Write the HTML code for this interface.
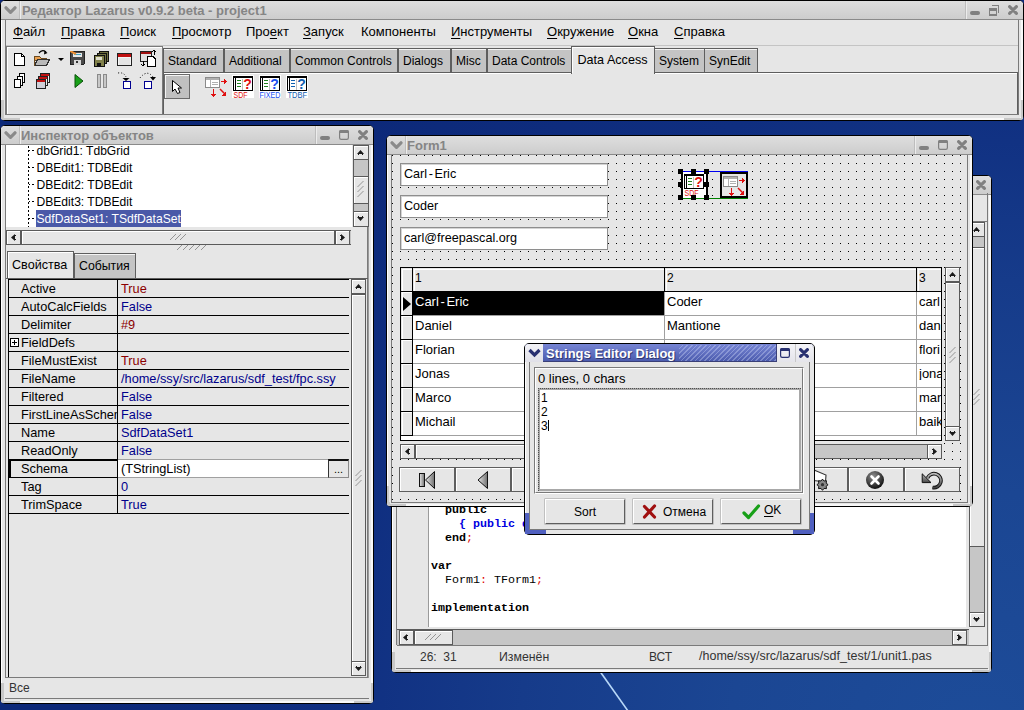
<!DOCTYPE html>
<html><head><meta charset="utf-8">
<style>
*{margin:0;padding:0;box-sizing:border-box}
html,body{width:1024px;height:710px;overflow:hidden}
body{position:relative;font-family:"Liberation Sans",sans-serif;font-size:12px;color:#000;
background:radial-gradient(circle 700px at 980px 740px,#1d4c99 0px,#1b4693 250px,#163b8a 460px,#0f2e80 660px,#0c2878 900px)}
.a{position:absolute}
.t{position:absolute;white-space:nowrap;line-height:1}
u{text-decoration:underline;text-underline-offset:2px}
</style></head><body>

<svg class="a" style="left:590px;top:660px" width="50" height="50"><line x1="9" y1="10" x2="38" y2="51" stroke="#b8d8f8" stroke-width="1.6"/></svg>
<div class="a" style="left:0px;top:0px;width:1024px;height:121px;background:#e6e6e6;border:1px solid #000;border-radius:5px"></div>
<div class="a" style="left:1px;top:1px;width:1022px;height:119px;border-top:1px solid #fff;border-left:1px solid #fff;border-right:2px solid #f8f8f8;border-bottom:2px solid #f8f8f8;border-radius:4px"></div>
<div class="a" style="left:1px;top:100px;width:3px;height:19px;background:#c8c8c8"></div>
<div class="a" style="left:1px;top:118px;width:19px;height:2px;background:#c8c8c8;border-bottom-left-radius:4px"></div>
<div class="a" style="left:1021px;top:100px;width:2px;height:19px;background:#c8c8c8"></div>
<div class="a" style="left:1004px;top:118px;width:19px;height:2px;background:#c8c8c8;border-bottom-right-radius:4px"></div>
<div class="a" style="left:1px;top:1px;width:1022px;height:19px;background:linear-gradient(#dedede,#cdcdcd);border-radius:4px 4px 0 0;border-bottom:1px solid #8a8a8a"></div>
<div class="t" style="left:22px;top:4.00px;font-size:13px;font-weight:bold;font-family:'Liberation Sans';color:#858585">Редактор Lazarus v0.9.2 beta - project1</div>
<div class="a" style="left:19px;top:1px;width:1px;height:18px;background:#bdbdbd"></div>
<div class="a" style="left:20px;top:1px;width:1px;height:18px;background:#ececec"></div>
<div class="a" style="left:965px;top:1px;width:1px;height:18px;background:#bdbdbd"></div>
<div class="a" style="left:966px;top:1px;width:1px;height:18px;background:#ececec"></div>
<svg class="a" style="left:3.5px;top:6px" width="14" height="10"><polyline points="2,1.8 6.5,6.3 11,1.8" fill="none" stroke="#8a8a8a" stroke-width="3.2" stroke-linecap="round" stroke-linejoin="round"/></svg>
<svg class="a" style="left:970px;top:11px" width="10" height="4"><rect x="0" y="0" width="10" height="4" rx="2" fill="#808080"/></svg>
<svg class="a" style="left:989px;top:5px" width="11" height="11" shape-rendering="crispEdges"><path d="M2.5,0.5 H9.5 V7.5" fill="none" stroke="#808080" stroke-width="1.2"/><rect x="0.5" y="3.5" width="7" height="6.5" fill="none" stroke="#808080" stroke-width="1.2"/><rect x="0" y="3" width="8" height="2.5" fill="#808080"/></svg>
<svg class="a" style="left:1008px;top:5px" width="10" height="10"><path d="M1.6,1.6 L8.4,8.4 M8.4,1.6 L1.6,8.4" stroke="#808080" stroke-width="3.1" stroke-linecap="round"/></svg>
<div class="a" style="left:5px;top:20px;width:1px;height:95px;background:#7a7a7a"></div>
<div class="t" style="left:13px;top:25.00px;font-size:13px;font-family:'Liberation Sans';"><u>Ф</u>айл</div>
<div class="t" style="left:61px;top:25.00px;font-size:13px;font-family:'Liberation Sans';"><u>П</u>равка</div>
<div class="t" style="left:120px;top:25.00px;font-size:13px;font-family:'Liberation Sans';"><u>П</u>оиск</div>
<div class="t" style="left:172px;top:25.00px;font-size:13px;font-family:'Liberation Sans';"><u>П</u>росмотр</div>
<div class="t" style="left:246px;top:25.00px;font-size:13px;font-family:'Liberation Sans';">Про<u>е</u>кт</div>
<div class="t" style="left:303px;top:25.00px;font-size:13px;font-family:'Liberation Sans';"><u>З</u>апуск</div>
<div class="t" style="left:361px;top:25.00px;font-size:13px;font-family:'Liberation Sans';">Компоненты</div>
<div class="t" style="left:451px;top:25.00px;font-size:13px;font-family:'Liberation Sans';"><u>И</u>нструменты</div>
<div class="t" style="left:547px;top:25.00px;font-size:13px;font-family:'Liberation Sans';"><u>О</u>кружение</div>
<div class="t" style="left:628px;top:25.00px;font-size:13px;font-family:'Liberation Sans';"><u>О</u>кна</div>
<div class="t" style="left:674px;top:25.00px;font-size:13px;font-family:'Liberation Sans';"><u>С</u>правка</div>
<div class="a" style="left:6px;top:45px;width:1012px;height:1px;background:#c4c4c4"></div>
<div class="a" style="left:6px;top:46px;width:157px;height:69px;border:1px solid #7a7a7a;border-top-color:#7a7a7a"></div>
<div class="a" style="left:7px;top:47px;width:155px;height:1px;background:#fff"></div>
<div class="a" style="left:7px;top:47px;width:1px;height:67px;background:#fff"></div>
<div class="a" style="left:163px;top:48px;width:61px;height:25px;background:#c4c4c4;border:1px solid #5e5e5e;border-bottom:none"></div>
<div class="a" style="left:164px;top:49px;width:59px;height:1px;background:#f4f4f4"></div>
<div class="t" style="left:168px;top:54.5px;font-size:12px">Standard</div>
<div class="a" style="left:224px;top:48px;width:66px;height:25px;background:#c4c4c4;border:1px solid #5e5e5e;border-bottom:none"></div>
<div class="a" style="left:225px;top:49px;width:64px;height:1px;background:#f4f4f4"></div>
<div class="t" style="left:229px;top:54.5px;font-size:12px">Additional</div>
<div class="a" style="left:290px;top:48px;width:108px;height:25px;background:#c4c4c4;border:1px solid #5e5e5e;border-bottom:none"></div>
<div class="a" style="left:291px;top:49px;width:106px;height:1px;background:#f4f4f4"></div>
<div class="t" style="left:295px;top:54.5px;font-size:12px">Common Controls</div>
<div class="a" style="left:398px;top:48px;width:53px;height:25px;background:#c4c4c4;border:1px solid #5e5e5e;border-bottom:none"></div>
<div class="a" style="left:399px;top:49px;width:51px;height:1px;background:#f4f4f4"></div>
<div class="t" style="left:403px;top:54.5px;font-size:12px">Dialogs</div>
<div class="a" style="left:451px;top:48px;width:36px;height:25px;background:#c4c4c4;border:1px solid #5e5e5e;border-bottom:none"></div>
<div class="a" style="left:452px;top:49px;width:34px;height:1px;background:#f4f4f4"></div>
<div class="t" style="left:456px;top:54.5px;font-size:12px">Misc</div>
<div class="a" style="left:487px;top:48px;width:85px;height:25px;background:#c4c4c4;border:1px solid #5e5e5e;border-bottom:none"></div>
<div class="a" style="left:488px;top:49px;width:83px;height:1px;background:#f4f4f4"></div>
<div class="t" style="left:492px;top:54.5px;font-size:12px">Data Controls</div>
<div class="a" style="left:654px;top:48px;width:51px;height:25px;background:#c4c4c4;border:1px solid #5e5e5e;border-bottom:none"></div>
<div class="a" style="left:655px;top:49px;width:49px;height:1px;background:#f4f4f4"></div>
<div class="t" style="left:659px;top:54.5px;font-size:12px">System</div>
<div class="a" style="left:704px;top:48px;width:54px;height:25px;background:#c4c4c4;border:1px solid #5e5e5e;border-bottom:none"></div>
<div class="a" style="left:705px;top:49px;width:52px;height:1px;background:#f4f4f4"></div>
<div class="t" style="left:709px;top:54.5px;font-size:12px">SynEdit</div>
<div class="a" style="left:163px;top:72px;width:855px;height:43px;border:1px solid #5e5e5e;border-top:1px solid #5e5e5e"></div>
<div class="a" style="left:164px;top:73px;width:853px;height:1px;background:#fff"></div>
<div class="a" style="left:571px;top:46px;width:84px;height:28px;background:#e6e6e6;border:1px solid #5e5e5e;border-bottom:none"></div>
<div class="a" style="left:572px;top:47px;width:82px;height:1px;background:#fff"></div>
<div class="a" style="left:572px;top:47px;width:1px;height:26px;background:#fff"></div>
<div class="t" style="left:577.5px;top:54px;font-size:12.6px">Data Access</div>
<div class="a" style="left:5px;top:114px;width:1014px;height:1px;background:#7a7a7a"></div>
<div class="a" style="left:1018px;top:20px;width:1px;height:95px;background:#7a7a7a"></div>
<div class="a" style="left:0px;top:125px;width:374px;height:579px;background:#e6e6e6;border:1px solid #000;border-radius:5px"></div>
<div class="a" style="left:1px;top:126px;width:372px;height:577px;border-top:1px solid #fff;border-left:1px solid #fff;border-right:2px solid #f8f8f8;border-bottom:2px solid #f8f8f8;border-radius:4px"></div>
<div class="a" style="left:1px;top:683px;width:3px;height:19px;background:#c8c8c8"></div>
<div class="a" style="left:1px;top:701px;width:19px;height:2px;background:#c8c8c8;border-bottom-left-radius:4px"></div>
<div class="a" style="left:371px;top:683px;width:2px;height:19px;background:#c8c8c8"></div>
<div class="a" style="left:354px;top:701px;width:19px;height:2px;background:#c8c8c8;border-bottom-right-radius:4px"></div>
<div class="a" style="left:1px;top:126px;width:372px;height:19px;background:linear-gradient(#dedede,#cdcdcd);border-radius:4px 4px 0 0;border-bottom:1px solid #8a8a8a"></div>
<div class="t" style="left:21px;top:129.00px;font-size:13px;font-weight:bold;font-family:'Liberation Sans';color:#858585">Инспектор объектов</div>
<div class="a" style="left:19px;top:126px;width:1px;height:18px;background:#bdbdbd"></div>
<div class="a" style="left:20px;top:126px;width:1px;height:18px;background:#ececec"></div>
<div class="a" style="left:315px;top:126px;width:1px;height:18px;background:#bdbdbd"></div>
<div class="a" style="left:316px;top:126px;width:1px;height:18px;background:#ececec"></div>
<svg class="a" style="left:3.5px;top:131px" width="14" height="10"><polyline points="2,1.8 6.5,6.3 11,1.8" fill="none" stroke="#8a8a8a" stroke-width="3.2" stroke-linecap="round" stroke-linejoin="round"/></svg>
<svg class="a" style="left:320px;top:136px" width="10" height="4"><rect x="0" y="0" width="10" height="4" rx="2" fill="#808080"/></svg>
<svg class="a" style="left:339px;top:130px" width="10" height="10"><rect x="0.6" y="0.6" width="8.8" height="8.8" rx="1.6" fill="none" stroke="#808080" stroke-width="1.2"/><path d="M0,3 V2 Q0,0 2,0 H8 Q10,0 10,2 V3 Z" fill="#808080"/></svg>
<svg class="a" style="left:358px;top:130px" width="10" height="10"><path d="M1.6,1.6 L8.4,8.4 M8.4,1.6 L1.6,8.4" stroke="#808080" stroke-width="3.1" stroke-linecap="round"/></svg>
<div class="a" style="left:5px;top:145px;width:1px;height:533px;background:#7a7a7a"></div>
<div class="a" style="left:367px;top:145px;width:1px;height:533px;background:#7a7a7a"></div>
<div class="a" style="left:368px;top:145px;width:1px;height:533px;background:#9a9a9a"></div>
<div class="a" style="left:6px;top:145px;width:347px;height:82px;background:#fff"></div>
<svg class="a" style="left:20px;top:145px" width="20" height="82"><line x1="8.5" y1="1" x2="8.5" y2="82" stroke="#000" stroke-dasharray="2,2"/><rect x="9" y="5" width="1" height="1" fill="#000"/><rect x="12" y="5" width="2" height="1" fill="#000"/><rect x="9" y="22" width="1" height="1" fill="#000"/><rect x="12" y="22" width="2" height="1" fill="#000"/><rect x="9" y="39" width="1" height="1" fill="#000"/><rect x="12" y="39" width="2" height="1" fill="#000"/><rect x="9" y="56" width="1" height="1" fill="#000"/><rect x="12" y="56" width="2" height="1" fill="#000"/><rect x="9" y="73" width="1" height="1" fill="#000"/><rect x="12" y="73" width="2" height="1" fill="#000"/></svg>
<div class="t" style="left:36.5px;top:144.76px;font-size:12.1px;font-family:'Liberation Sans';">dbGrid1: TdbGrid</div>
<div class="t" style="left:36.5px;top:161.76px;font-size:12.1px;font-family:'Liberation Sans';">DBEdit1: TDBEdit</div>
<div class="t" style="left:36.5px;top:178.76px;font-size:12.1px;font-family:'Liberation Sans';">DBEdit2: TDBEdit</div>
<div class="t" style="left:36.5px;top:195.76px;font-size:12.1px;font-family:'Liberation Sans';">DBEdit3: TDBEdit</div>
<div class="a" style="left:36px;top:210px;width:145px;height:17px;background:#4a59a8"></div>
<div class="t" style="left:36.5px;top:212.76px;font-size:12.1px;font-family:'Liberation Sans';color:#fff">SdfDataSet1: TSdfDataSet</div>
<div class="a" style="left:352px;top:145px;width:1px;height:82px;background:#e6e6e6"></div>
<div class="a" style="left:353px;top:145px;width:16px;height:82px;background:#c6c6c6;border-left:1px solid #5a5a5a;border-right:1px solid #5a5a5a"></div>
<div class="a" style="left:353px;top:145px;width:16px;height:15px;background:#e6e6e6;border:1px solid #5a5a5a"></div>
<div class="a" style="left:354px;top:146px;width:14px;height:13px;border-top:1px solid #fff;border-left:1px solid #fff"></div>
<div class="a" style="left:353px;top:176px;width:16px;height:28px;background:#e6e6e6;border:1px solid #5a5a5a"></div>
<div class="a" style="left:354px;top:177px;width:14px;height:26px;border-top:1px solid #fff;border-left:1px solid #fff"></div>
<div class="a" style="left:353px;top:211px;width:16px;height:16px;background:#e6e6e6;border:1px solid #5a5a5a"></div>
<div class="a" style="left:354px;top:212px;width:14px;height:14px;border-top:1px solid #fff;border-left:1px solid #fff"></div>
<div class="a" style="left:6px;top:227px;width:347px;height:3px;background:#e6e6e6"></div>
<div class="a" style="left:6px;top:230px;width:345px;height:15px;border-top:1px solid #5a5a5a;border-bottom:1px solid #5a5a5a;background:#c6c6c6"></div>
<div class="a" style="left:6px;top:230px;width:15px;height:15px;background:#e6e6e6;border:1px solid #5a5a5a"></div>
<div class="a" style="left:7px;top:231px;width:13px;height:13px;border-top:1px solid #fff;border-left:1px solid #fff"></div>
<div class="a" style="left:21px;top:230px;width:314px;height:15px;background:#e6e6e6;border:1px solid #5a5a5a"></div>
<div class="a" style="left:22px;top:231px;width:312px;height:13px;border-top:1px solid #fff;border-left:1px solid #fff"></div>
<div class="a" style="left:335px;top:230px;width:15px;height:15px;background:#e6e6e6;border:1px solid #5a5a5a"></div>
<div class="a" style="left:336px;top:231px;width:13px;height:13px;border-top:1px solid #fff;border-left:1px solid #fff"></div>
<div class="a" style="left:74px;top:253px;width:62px;height:25px;background:#c4c4c4;border:1px solid #5e5e5e;border-bottom:none"></div>
<div class="a" style="left:75px;top:254px;width:60px;height:1px;background:#f4f4f4"></div>
<div class="t" style="left:79px;top:259.59px;font-size:12.3px;font-family:'Liberation Sans';">События</div>
<div class="a" style="left:7px;top:251px;width:67px;height:28px;background:#e6e6e6;border:1px solid #5e5e5e;border-bottom:none"></div>
<div class="a" style="left:8px;top:252px;width:65px;height:1px;background:#fff"></div>
<div class="a" style="left:8px;top:252px;width:1px;height:26px;background:#fff"></div>
<div class="t" style="left:12px;top:259.33px;font-size:12.6px;font-family:'Liberation Sans';">Свойства</div>
<div class="a" style="left:6px;top:278px;width:362px;height:1px;background:#5e5e5e"></div>
<div class="a" style="left:8px;top:279px;width:341px;height:398px;border-left:1px solid #000;border-top:1px solid #000;background:#e6e6e6"></div>
<div class="a" style="left:9px;top:297px;width:340px;height:1px;background:#000"></div>
<div class="a" style="left:117px;top:280px;width:1px;height:17px;background:#000"></div>
<div class="t" style="left:21px;top:282.90px;width:96px;overflow:hidden;font-size:12.75px">Active</div>
<div class="t" style="left:121px;top:282.90px;font-size:12.75px;color:#8b0000">True</div>
<div class="a" style="left:9px;top:315px;width:340px;height:1px;background:#000"></div>
<div class="a" style="left:117px;top:298px;width:1px;height:17px;background:#000"></div>
<div class="t" style="left:21px;top:300.90px;width:96px;overflow:hidden;font-size:12.75px">AutoCalcFields</div>
<div class="t" style="left:121px;top:300.90px;font-size:12.75px;color:#00008b">False</div>
<div class="a" style="left:9px;top:333px;width:340px;height:1px;background:#000"></div>
<div class="a" style="left:117px;top:316px;width:1px;height:17px;background:#000"></div>
<div class="t" style="left:21px;top:318.90px;width:96px;overflow:hidden;font-size:12.75px">Delimiter</div>
<div class="t" style="left:121px;top:318.90px;font-size:12.75px;color:#8b0000">#9</div>
<div class="a" style="left:9px;top:351px;width:340px;height:1px;background:#000"></div>
<div class="a" style="left:117px;top:334px;width:1px;height:17px;background:#000"></div>
<div class="t" style="left:21px;top:336.90px;width:96px;overflow:hidden;font-size:12.75px">FieldDefs</div>
<div class="a" style="left:9px;top:369px;width:340px;height:1px;background:#000"></div>
<div class="a" style="left:117px;top:352px;width:1px;height:17px;background:#000"></div>
<div class="t" style="left:21px;top:354.90px;width:96px;overflow:hidden;font-size:12.75px">FileMustExist</div>
<div class="t" style="left:121px;top:354.90px;font-size:12.75px;color:#8b0000">True</div>
<div class="a" style="left:9px;top:387px;width:340px;height:1px;background:#000"></div>
<div class="a" style="left:117px;top:370px;width:1px;height:17px;background:#000"></div>
<div class="t" style="left:21px;top:372.90px;width:96px;overflow:hidden;font-size:12.75px">FileName</div>
<div class="t" style="left:121px;top:372.90px;font-size:12.75px;color:#00008b">/home/ssy/src/lazarus/sdf_test/fpc.ssy</div>
<div class="a" style="left:9px;top:405px;width:340px;height:1px;background:#000"></div>
<div class="a" style="left:117px;top:388px;width:1px;height:17px;background:#000"></div>
<div class="t" style="left:21px;top:390.90px;width:96px;overflow:hidden;font-size:12.75px">Filtered</div>
<div class="t" style="left:121px;top:390.90px;font-size:12.75px;color:#00008b">False</div>
<div class="a" style="left:9px;top:423px;width:340px;height:1px;background:#000"></div>
<div class="a" style="left:117px;top:406px;width:1px;height:17px;background:#000"></div>
<div class="t" style="left:21px;top:408.90px;width:96px;overflow:hidden;font-size:12.75px">FirstLineAsSchema</div>
<div class="t" style="left:121px;top:408.90px;font-size:12.75px;color:#00008b">False</div>
<div class="a" style="left:9px;top:441px;width:340px;height:1px;background:#000"></div>
<div class="a" style="left:117px;top:424px;width:1px;height:17px;background:#000"></div>
<div class="t" style="left:21px;top:426.90px;width:96px;overflow:hidden;font-size:12.75px">Name</div>
<div class="t" style="left:121px;top:426.90px;font-size:12.75px;color:#00008b">SdfDataSet1</div>
<div class="a" style="left:9px;top:459px;width:340px;height:1px;background:#000"></div>
<div class="a" style="left:117px;top:442px;width:1px;height:17px;background:#000"></div>
<div class="t" style="left:21px;top:444.90px;width:96px;overflow:hidden;font-size:12.75px">ReadOnly</div>
<div class="t" style="left:121px;top:444.90px;font-size:12.75px;color:#00008b">False</div>
<div class="a" style="left:9px;top:477px;width:340px;height:1px;background:#000"></div>
<div class="a" style="left:117px;top:460px;width:1px;height:17px;background:#000"></div>
<div class="t" style="left:21px;top:462.90px;width:96px;overflow:hidden;font-size:12.75px">Schema</div>
<div class="a" style="left:118px;top:459px;width:210px;height:19px;background:#fff;border-top:1px solid #a0a0a0;border-bottom:1px solid #a0a0a0"></div>
<div class="a" style="left:328px;top:459px;width:21px;height:19px;background:#e6e6e6;border-top:2px solid #111;border-left:1px solid #333;border-bottom:1px solid #8a8a8a;border-right:1px solid #8a8a8a"></div>
<div class="t" style="left:334px;top:463.69px;font-size:11px;font-family:'Liberation Sans';">...</div>
<div class="t" style="left:121px;top:462.90px;font-size:12.75px;color:#000">(TStringList)</div>
<div class="a" style="left:9px;top:495px;width:340px;height:1px;background:#000"></div>
<div class="a" style="left:117px;top:478px;width:1px;height:17px;background:#000"></div>
<div class="t" style="left:21px;top:480.90px;width:96px;overflow:hidden;font-size:12.75px">Tag</div>
<div class="t" style="left:121px;top:480.90px;font-size:12.75px;color:#00008b">0</div>
<div class="a" style="left:9px;top:513px;width:340px;height:1px;background:#000"></div>
<div class="a" style="left:117px;top:496px;width:1px;height:17px;background:#000"></div>
<div class="t" style="left:21px;top:498.90px;width:96px;overflow:hidden;font-size:12.75px">TrimSpace</div>
<div class="t" style="left:121px;top:498.90px;font-size:12.75px;color:#00008b">True</div>
<div class="a" style="left:10px;top:338px;width:9px;height:9px;border:1px solid #000;background:#fff"></div>
<div class="a" style="left:12px;top:342px;width:5px;height:1px;background:#000"></div>
<div class="a" style="left:14px;top:340px;width:1px;height:5px;background:#000"></div>
<div class="a" style="left:9px;top:459px;width:108px;height:19px;border:2px solid #000;border-right:none;border-bottom:none"></div>
<div class="a" style="left:351px;top:279px;width:15px;height:15px;background:#e6e6e6;border:1px solid #5a5a5a"></div>
<div class="a" style="left:352px;top:280px;width:13px;height:13px;border-top:1px solid #fff;border-left:1px solid #fff"></div>
<div class="a" style="left:351px;top:294px;width:15px;height:368px;background:#e6e6e6;border:1px solid #5a5a5a"></div>
<div class="a" style="left:352px;top:295px;width:13px;height:366px;border-top:1px solid #fff;border-left:1px solid #fff"></div>
<div class="a" style="left:351px;top:661px;width:15px;height:15px;background:#e6e6e6;border:1px solid #5a5a5a"></div>
<div class="a" style="left:352px;top:662px;width:13px;height:13px;border-top:1px solid #fff;border-left:1px solid #fff"></div>
<div class="a" style="left:6px;top:677px;width:362px;height:1px;background:#7a7a7a"></div>
<div class="t" style="left:9px;top:681.84px;font-size:12px;font-family:'Liberation Sans';color:#333">Все</div>
<div class="a" style="left:5px;top:698px;width:364px;height:1px;background:#7a7a7a"></div>
<div class="a" style="left:391px;top:175px;width:601px;height:498px;background:#e6e6e6;border:1px solid #000;border-radius:5px"></div>
<div class="a" style="left:392px;top:176px;width:599px;height:496px;border-top:1px solid #fff;border-left:1px solid #fff;border-right:2px solid #f8f8f8;border-bottom:2px solid #f8f8f8;border-radius:4px"></div>
<div class="a" style="left:392px;top:652px;width:3px;height:19px;background:#c8c8c8"></div>
<div class="a" style="left:392px;top:670px;width:19px;height:2px;background:#c8c8c8;border-bottom-left-radius:4px"></div>
<div class="a" style="left:989px;top:652px;width:2px;height:19px;background:#c8c8c8"></div>
<div class="a" style="left:972px;top:670px;width:19px;height:2px;background:#c8c8c8;border-bottom-right-radius:4px"></div>
<div class="a" style="left:392px;top:176px;width:599px;height:19px;background:linear-gradient(#dedede,#cdcdcd);border-radius:4px 4px 0 0;border-bottom:1px solid #8a8a8a"></div>
<svg class="a" style="left:976px;top:180px" width="10" height="10"><path d="M1.6,1.6 L8.4,8.4 M8.4,1.6 L1.6,8.4" stroke="#808080" stroke-width="3.1" stroke-linecap="round"/></svg>
<div class="a" style="left:396px;top:193px;width:1px;height:452px;background:#7a7a7a"></div>
<div class="a" style="left:987px;top:193px;width:1px;height:452px;background:#7a7a7a"></div>
<div class="a" style="left:397px;top:221px;width:590px;height:1px;background:#7a7a7a"></div>
<div class="a" style="left:397px;top:222px;width:32px;height:405px;background:#e6e6e6"></div>
<div class="a" style="left:428px;top:222px;width:1px;height:405px;background:#9a9a9a"></div>
<div class="a" style="left:429px;top:222px;width:537px;height:405px;background:#fff"></div>
<div class="a" style="left:969px;top:222px;width:16px;height:405px;background:#c6c6c6;border-left:1px solid #5a5a5a;border-right:1px solid #5a5a5a"></div>
<div class="a" style="left:969px;top:222px;width:16px;height:15px;background:#e6e6e6;border:1px solid #5a5a5a"></div>
<div class="a" style="left:970px;top:223px;width:14px;height:13px;border-top:1px solid #fff;border-left:1px solid #fff"></div>
<div class="a" style="left:969px;top:247px;width:16px;height:300px;background:#e6e6e6;border:1px solid #5a5a5a"></div>
<div class="a" style="left:970px;top:248px;width:14px;height:298px;border-top:1px solid #fff;border-left:1px solid #fff"></div>
<div class="a" style="left:969px;top:612px;width:16px;height:15px;background:#e6e6e6;border:1px solid #5a5a5a"></div>
<div class="a" style="left:970px;top:613px;width:14px;height:13px;border-top:1px solid #fff;border-left:1px solid #fff"></div>
<div class="a" style="left:397px;top:627px;width:572px;height:2px;background:#e6e6e6"></div>
<div class="a" style="left:397px;top:629px;width:572px;height:17px;background:#c6c6c6;border-top:1px solid #5a5a5a;border-bottom:1px solid #5a5a5a"></div>
<div class="a" style="left:399px;top:630px;width:15px;height:15px;background:#e6e6e6;border:1px solid #5a5a5a"></div>
<div class="a" style="left:400px;top:631px;width:13px;height:13px;border-top:1px solid #fff;border-left:1px solid #fff"></div>
<div class="a" style="left:414px;top:630px;width:39px;height:15px;background:#e6e6e6;border:1px solid #5a5a5a"></div>
<div class="a" style="left:415px;top:631px;width:37px;height:13px;border-top:1px solid #fff;border-left:1px solid #fff"></div>
<div class="a" style="left:952px;top:630px;width:15px;height:15px;background:#e6e6e6;border:1px solid #5a5a5a"></div>
<div class="a" style="left:953px;top:631px;width:13px;height:13px;border-top:1px solid #fff;border-left:1px solid #fff"></div>
<div class="a" style="left:397px;top:645px;width:591px;height:1px;background:#7a7a7a"></div>
<div class="t" style="left:420px;top:650.84px;font-size:12px;font-family:'Liberation Sans';color:#333">26:&nbsp;&nbsp;31</div>
<div class="t" style="left:499px;top:650.59px;font-size:12.3px;font-family:'Liberation Sans';color:#333">Изменён</div>
<div class="t" style="left:649px;top:650.84px;font-size:12px;font-family:'Liberation Sans';color:#333">ВСТ</div>
<div class="t" style="left:699px;top:650.42px;font-size:12.5px;font-family:'Liberation Sans';color:#333">/home/ssy/src/lazarus/sdf_test/1/unit1.pas</div>
<div class="a" style="left:396px;top:668px;width:592px;height:1px;background:#7a7a7a"></div>
<div class="t" style="left:445px;top:504.55px;font-size:11.67px;font-family:'Liberation Mono';"><b>public</b></div>
<div class="t" style="left:459px;top:518.55px;font-size:11.67px;font-family:'Liberation Mono';"><b style="color:#0000e0">{ public declarations }</b></div>
<div class="t" style="left:445px;top:532.55px;font-size:11.67px;font-family:'Liberation Mono';"><b>end</b><span style="color:#e00000">;</span></div>
<div class="t" style="left:431px;top:560.55px;font-size:11.67px;font-family:'Liberation Mono';"><b>var</b></div>
<div class="t" style="left:445px;top:574.55px;font-size:11.67px;font-family:'Liberation Mono';">Form1<span style="color:#e00000">:</span> TForm1<span style="color:#e00000">;</span></div>
<div class="t" style="left:431px;top:602.55px;font-size:11.67px;font-family:'Liberation Mono';"><b>implementation</b></div>
<div class="a" style="left:386px;top:135px;width:587px;height:372px;background:#e6e6e6;border:1px solid #000;border-radius:5px"></div>
<div class="a" style="left:387px;top:136px;width:585px;height:370px;border-top:1px solid #fff;border-left:1px solid #fff;border-right:2px solid #f8f8f8;border-bottom:2px solid #f8f8f8;border-radius:4px"></div>
<div class="a" style="left:387px;top:486px;width:3px;height:19px;background:#c8c8c8"></div>
<div class="a" style="left:387px;top:504px;width:19px;height:2px;background:#c8c8c8;border-bottom-left-radius:4px"></div>
<div class="a" style="left:970px;top:486px;width:2px;height:19px;background:#c8c8c8"></div>
<div class="a" style="left:953px;top:504px;width:19px;height:2px;background:#c8c8c8;border-bottom-right-radius:4px"></div>
<div class="a" style="left:387px;top:136px;width:585px;height:19px;background:linear-gradient(#dedede,#cdcdcd);border-radius:4px 4px 0 0;border-bottom:1px solid #8a8a8a"></div>
<div class="t" style="left:407px;top:139.00px;font-size:13px;font-weight:bold;font-family:'Liberation Sans';color:#858585">Form1</div>
<div class="a" style="left:405px;top:136px;width:1px;height:18px;background:#bdbdbd"></div>
<div class="a" style="left:406px;top:136px;width:1px;height:18px;background:#ececec"></div>
<div class="a" style="left:914px;top:136px;width:1px;height:18px;background:#bdbdbd"></div>
<div class="a" style="left:915px;top:136px;width:1px;height:18px;background:#ececec"></div>
<svg class="a" style="left:389.5px;top:141px" width="14" height="10"><polyline points="2,1.8 6.5,6.3 11,1.8" fill="none" stroke="#8a8a8a" stroke-width="3.2" stroke-linecap="round" stroke-linejoin="round"/></svg>
<svg class="a" style="left:919px;top:146px" width="10" height="4"><rect x="0" y="0" width="10" height="4" rx="2" fill="#808080"/></svg>
<svg class="a" style="left:938px;top:140px" width="10" height="10"><rect x="0.6" y="0.6" width="8.8" height="8.8" rx="1.6" fill="none" stroke="#808080" stroke-width="1.2"/><path d="M0,3 V2 Q0,0 2,0 H8 Q10,0 10,2 V3 Z" fill="#808080"/></svg>
<svg class="a" style="left:957px;top:140px" width="10" height="10"><path d="M1.6,1.6 L8.4,8.4 M8.4,1.6 L1.6,8.4" stroke="#808080" stroke-width="3.1" stroke-linecap="round"/></svg>
<svg class="a" style="left:389px;top:155px" width="579" height="347"><defs><pattern id="dots" x="3" y="0" width="8" height="8" patternUnits="userSpaceOnUse"><rect x="0" y="0" width="1" height="1" fill="#000"/></pattern></defs><rect x="0" y="0" width="579" height="347" fill="#e6e6e6"/><rect x="0" y="0" width="579" height="347" fill="url(#dots)"/></svg>
<div class="a" style="left:391px;top:155px;width:1px;height:348px;background:#7a7a7a"></div>
<div class="a" style="left:967px;top:155px;width:1px;height:348px;background:#7a7a7a"></div>
<div class="a" style="left:391px;top:502px;width:577px;height:1px;background:#7a7a7a"></div>
<div class="a" style="left:400px;top:163px;width:208px;height:23px;background:#fff;border:1px solid #8e8e8e;box-shadow:inset 1px 1px 0 #d4d4d4"></div>
<div class="t" style="left:404px;top:167.83px;font-size:12.6px;font-family:'Liberation Sans';">Carl<span style="margin:0 1.6px">-</span>Eric</div>
<div class="a" style="left:400px;top:195px;width:208px;height:23px;background:#fff;border:1px solid #8e8e8e;box-shadow:inset 1px 1px 0 #d4d4d4"></div>
<div class="t" style="left:404px;top:199.83px;font-size:12.6px;font-family:'Liberation Sans';">Coder</div>
<div class="a" style="left:400px;top:227px;width:208px;height:23px;background:#fff;border:1px solid #8e8e8e;box-shadow:inset 1px 1px 0 #d4d4d4"></div>
<div class="t" style="left:404px;top:231.83px;font-size:12.6px;font-family:'Liberation Sans';">carl@freepascal.org</div>
<div class="a" style="left:400px;top:267px;width:542px;height:174px;background:#fff;border:1px solid #000"></div>
<div class="a" style="left:401px;top:268px;width:540px;height:23px;background:#e6e6e6"></div>
<div class="a" style="left:401px;top:268px;width:11px;height:167px;background:#e6e6e6"></div>
<div class="a" style="left:412px;top:268px;width:1px;height:168px;background:#000"></div>
<div class="a" style="left:401px;top:291px;width:540px;height:1px;background:#000"></div>
<div class="a" style="left:664px;top:268px;width:1px;height:24px;background:#000"></div>
<div class="a" style="left:916px;top:268px;width:1px;height:24px;background:#000"></div>
<div class="a" style="left:402px;top:269px;width:10px;height:22px;border-top:1px solid #fff;border-left:1px solid #fff"></div>
<div class="a" style="left:414px;top:269px;width:250px;height:22px;border-top:1px solid #fff;border-left:1px solid #fff"></div>
<div class="a" style="left:666px;top:269px;width:250px;height:22px;border-top:1px solid #fff;border-left:1px solid #fff"></div>
<div class="a" style="left:918px;top:269px;width:23px;height:22px;border-top:1px solid #fff;border-left:1px solid #fff"></div>
<div class="a" style="left:413px;top:315px;width:528px;height:1px;background:#a0a0a0"></div>
<div class="a" style="left:401px;top:315px;width:11px;height:1px;background:#000"></div>
<div class="a" style="left:402px;top:292px;width:10px;height:23px;border-top:1px solid #fff;border-left:1px solid #fff"></div>
<div class="a" style="left:664px;top:292px;width:1px;height:24px;background:#a0a0a0"></div>
<div class="a" style="left:916px;top:292px;width:1px;height:24px;background:#a0a0a0"></div>
<div class="a" style="left:413px;top:339px;width:528px;height:1px;background:#a0a0a0"></div>
<div class="a" style="left:401px;top:339px;width:11px;height:1px;background:#000"></div>
<div class="a" style="left:402px;top:316px;width:10px;height:23px;border-top:1px solid #fff;border-left:1px solid #fff"></div>
<div class="a" style="left:664px;top:316px;width:1px;height:24px;background:#a0a0a0"></div>
<div class="a" style="left:916px;top:316px;width:1px;height:24px;background:#a0a0a0"></div>
<div class="a" style="left:413px;top:363px;width:528px;height:1px;background:#a0a0a0"></div>
<div class="a" style="left:401px;top:363px;width:11px;height:1px;background:#000"></div>
<div class="a" style="left:402px;top:340px;width:10px;height:23px;border-top:1px solid #fff;border-left:1px solid #fff"></div>
<div class="a" style="left:664px;top:340px;width:1px;height:24px;background:#a0a0a0"></div>
<div class="a" style="left:916px;top:340px;width:1px;height:24px;background:#a0a0a0"></div>
<div class="a" style="left:413px;top:387px;width:528px;height:1px;background:#a0a0a0"></div>
<div class="a" style="left:401px;top:387px;width:11px;height:1px;background:#000"></div>
<div class="a" style="left:402px;top:364px;width:10px;height:23px;border-top:1px solid #fff;border-left:1px solid #fff"></div>
<div class="a" style="left:664px;top:364px;width:1px;height:24px;background:#a0a0a0"></div>
<div class="a" style="left:916px;top:364px;width:1px;height:24px;background:#a0a0a0"></div>
<div class="a" style="left:413px;top:411px;width:528px;height:1px;background:#a0a0a0"></div>
<div class="a" style="left:401px;top:411px;width:11px;height:1px;background:#000"></div>
<div class="a" style="left:402px;top:388px;width:10px;height:23px;border-top:1px solid #fff;border-left:1px solid #fff"></div>
<div class="a" style="left:664px;top:388px;width:1px;height:24px;background:#a0a0a0"></div>
<div class="a" style="left:916px;top:388px;width:1px;height:24px;background:#a0a0a0"></div>
<div class="a" style="left:413px;top:435px;width:528px;height:1px;background:#a0a0a0"></div>
<div class="a" style="left:401px;top:435px;width:11px;height:1px;background:#000"></div>
<div class="a" style="left:402px;top:412px;width:10px;height:23px;border-top:1px solid #fff;border-left:1px solid #fff"></div>
<div class="a" style="left:664px;top:412px;width:1px;height:24px;background:#a0a0a0"></div>
<div class="a" style="left:916px;top:412px;width:1px;height:24px;background:#a0a0a0"></div>
<div class="a" style="left:413px;top:292px;width:251px;height:23px;background:#000"></div>
<div class="t" style="left:415px;top:271.84px;font-size:12px;font-family:'Liberation Sans';">1</div>
<div class="t" style="left:667px;top:271.84px;font-size:12px;font-family:'Liberation Sans';">2</div>
<div class="t" style="left:919px;top:271.84px;font-size:12px;font-family:'Liberation Sans';">3</div>
<div class="t" style="left:415px;top:295.00px;font-size:13px;font-family:'Liberation Sans';color:#fff">Carl<span style="margin:0 1.6px">-</span>Eric</div>
<div class="t" style="left:667px;top:295.00px;font-size:13px;font-family:'Liberation Sans';">Coder</div>
<div class="t" style="left:919px;top:295px;width:22px;overflow:hidden;font-size:13px">carl</div>
<div class="t" style="left:415px;top:319.00px;font-size:13px;font-family:'Liberation Sans';">Daniel</div>
<div class="t" style="left:667px;top:319.00px;font-size:13px;font-family:'Liberation Sans';">Mantione</div>
<div class="t" style="left:919px;top:319px;width:22px;overflow:hidden;font-size:13px">dan</div>
<div class="t" style="left:415px;top:343.00px;font-size:13px;font-family:'Liberation Sans';">Florian</div>
<div class="t" style="left:919px;top:343px;width:22px;overflow:hidden;font-size:13px">flori</div>
<div class="t" style="left:415px;top:367.00px;font-size:13px;font-family:'Liberation Sans';">Jonas</div>
<div class="t" style="left:919px;top:367px;width:22px;overflow:hidden;font-size:13px">jona</div>
<div class="t" style="left:415px;top:391.00px;font-size:13px;font-family:'Liberation Sans';">Marco</div>
<div class="t" style="left:919px;top:391px;width:22px;overflow:hidden;font-size:13px">mar</div>
<div class="t" style="left:415px;top:415.00px;font-size:13px;font-family:'Liberation Sans';">Michail</div>
<div class="t" style="left:919px;top:415px;width:22px;overflow:hidden;font-size:13px">baik</div>
<svg class="a" style="left:403px;top:297px" width="9" height="15"><polygon points="0,0 8,7 0,14" fill="#000"/></svg>
<div class="a" style="left:945px;top:267px;width:15px;height:15px;background:#e6e6e6;border:1px solid #5a5a5a"></div>
<div class="a" style="left:946px;top:268px;width:13px;height:13px;border-top:1px solid #fff;border-left:1px solid #fff"></div>
<div class="a" style="left:945px;top:282px;width:15px;height:145px;background:#e6e6e6;border:1px solid #5a5a5a"></div>
<div class="a" style="left:946px;top:283px;width:13px;height:143px;border-top:1px solid #fff;border-left:1px solid #fff"></div>
<div class="a" style="left:945px;top:426px;width:15px;height:15px;background:#e6e6e6;border:1px solid #5a5a5a"></div>
<div class="a" style="left:946px;top:427px;width:13px;height:13px;border-top:1px solid #fff;border-left:1px solid #fff"></div>
<div class="a" style="left:400px;top:441px;width:542px;height:3px;background:#e6e6e6"></div>
<div class="a" style="left:400px;top:444px;width:542px;height:15px;background:#c6c6c6;border:1px solid #5a5a5a"></div>
<div class="a" style="left:400px;top:444px;width:15px;height:15px;background:#e6e6e6;border:1px solid #5a5a5a"></div>
<div class="a" style="left:401px;top:445px;width:13px;height:13px;border-top:1px solid #fff;border-left:1px solid #fff"></div>
<div class="a" style="left:415px;top:444px;width:250px;height:15px;background:#e6e6e6;border:1px solid #5a5a5a"></div>
<div class="a" style="left:416px;top:445px;width:248px;height:13px;border-top:1px solid #fff;border-left:1px solid #fff"></div>
<div class="a" style="left:927px;top:444px;width:15px;height:15px;background:#e6e6e6;border:1px solid #5a5a5a"></div>
<div class="a" style="left:928px;top:445px;width:13px;height:13px;border-top:1px solid #fff;border-left:1px solid #fff"></div>
<div class="a" style="left:399px;top:467px;width:56px;height:25px;background:#e6e6e6;border:1px solid #5e5e5e"></div>
<div class="a" style="left:400px;top:468px;width:54px;height:23px;border-top:1px solid #fff;border-left:1px solid #fff"></div>
<div class="a" style="left:455px;top:467px;width:56px;height:25px;background:#e6e6e6;border:1px solid #5e5e5e"></div>
<div class="a" style="left:456px;top:468px;width:54px;height:23px;border-top:1px solid #fff;border-left:1px solid #fff"></div>
<div class="a" style="left:511px;top:467px;width:56px;height:25px;background:#e6e6e6;border:1px solid #5e5e5e"></div>
<div class="a" style="left:512px;top:468px;width:54px;height:23px;border-top:1px solid #fff;border-left:1px solid #fff"></div>
<div class="a" style="left:567px;top:467px;width:56px;height:25px;background:#e6e6e6;border:1px solid #5e5e5e"></div>
<div class="a" style="left:568px;top:468px;width:54px;height:23px;border-top:1px solid #fff;border-left:1px solid #fff"></div>
<div class="a" style="left:623px;top:467px;width:56px;height:25px;background:#e6e6e6;border:1px solid #5e5e5e"></div>
<div class="a" style="left:624px;top:468px;width:54px;height:23px;border-top:1px solid #fff;border-left:1px solid #fff"></div>
<div class="a" style="left:679px;top:467px;width:57px;height:25px;background:#e6e6e6;border:1px solid #5e5e5e"></div>
<div class="a" style="left:680px;top:468px;width:55px;height:23px;border-top:1px solid #fff;border-left:1px solid #fff"></div>
<div class="a" style="left:736px;top:467px;width:56px;height:25px;background:#e6e6e6;border:1px solid #5e5e5e"></div>
<div class="a" style="left:737px;top:468px;width:54px;height:23px;border-top:1px solid #fff;border-left:1px solid #fff"></div>
<div class="a" style="left:792px;top:467px;width:56px;height:25px;background:#e6e6e6;border:1px solid #5e5e5e"></div>
<div class="a" style="left:793px;top:468px;width:54px;height:23px;border-top:1px solid #fff;border-left:1px solid #fff"></div>
<div class="a" style="left:848px;top:467px;width:56px;height:25px;background:#e6e6e6;border:1px solid #5e5e5e"></div>
<div class="a" style="left:849px;top:468px;width:54px;height:23px;border-top:1px solid #fff;border-left:1px solid #fff"></div>
<div class="a" style="left:904px;top:467px;width:56px;height:25px;background:#e6e6e6;border:1px solid #5e5e5e"></div>
<div class="a" style="left:905px;top:468px;width:54px;height:23px;border-top:1px solid #fff;border-left:1px solid #fff"></div>
<svg class="a" style="left:14px;top:53px" width="12" height="14" shape-rendering="crispEdges"><path d="M0.5,0.5 H7.5 L10.5,3.5 V12.5 H0.5 Z" fill="#fff" stroke="#000"/><path d="M7.5,0.5 V3.5 H10.5" fill="none" stroke="#000"/></svg>
<svg class="a" style="left:33px;top:49px" width="18" height="18" shape-rendering="crispEdges"><path d="M6,4 Q9,0 13,3" fill="none" stroke="#000" stroke-width="1.3" shape-rendering="auto"/><path d="M11.5,1.5 L14.5,4 L11,5.5 Z" fill="#000" shape-rendering="auto"/><path d="M1.5,7.5 H6.5 L8,9 H13.5 V11 H1.5 Z" fill="#e8a050" stroke="#6b4a20"/><path d="M1.5,16.5 L4.5,10.5 H16.5 L13.5,16.5 Z" fill="#b8b8b8" stroke="#303030"/><path d="M1.5,8 V16.5" stroke="#6b4a20"/></svg>
<svg class="a" style="left:58px;top:58px" width="6" height="4" shape-rendering="crispEdges"><path d="M0,0 H6 L3,3 Z" fill="#000" shape-rendering="auto"/></svg>
<svg class="a" style="left:70px;top:51px" width="16" height="15" shape-rendering="crispEdges"><rect x="0.5" y="0.5" width="14" height="13" rx="1.5" fill="#4a4a4a" stroke="#222"/><rect x="3" y="2" width="9" height="4" fill="#e8e8e8"/><line x1="4" y1="3.5" x2="11" y2="3.5" stroke="#40a0c0"/><rect x="4" y="9" width="7" height="5" fill="#d8d8d8"/><rect x="6" y="10" width="2" height="2" fill="#333"/><path d="M0,0 L6,3" stroke="#f09030" stroke-width="2" shape-rendering="auto"/></svg>
<svg class="a" style="left:94px;top:51px" width="16" height="16" shape-rendering="crispEdges"><rect x="5.5" y="0.5" width="9" height="10" fill="#707040" stroke="#111"/><rect x="3.5" y="2.5" width="9" height="10" fill="#707040" stroke="#111"/><rect x="0.5" y="4.5" width="10" height="11" fill="#80804a" stroke="#111"/><rect x="2" y="6" width="6" height="3" fill="#e0e0d0"/><rect x="3" y="12" width="4" height="3" fill="#111"/></svg>
<svg class="a" style="left:117px;top:53px" width="16" height="14" shape-rendering="crispEdges"><rect x="0.5" y="0.5" width="14" height="12" fill="#f4f4f4" stroke="#222"/><rect x="1" y="1" width="13" height="3" fill="#c01010"/><rect x="2" y="5" width="11" height="7" fill="#d8d8d8" opacity="0.6"/></svg>
<svg class="a" style="left:140px;top:50px" width="17" height="17" shape-rendering="crispEdges"><rect x="0.5" y="1.5" width="11" height="10" fill="#e0e0e0" stroke="#222"/><rect x="1" y="2" width="10" height="2" fill="#a01010"/><path d="M7.5,6.5 H13 L15.5,9 V16.5 H7.5 Z" fill="#fff" stroke="#000"/><path d="M14,0 V5 M12,2 L14,0 L16,2" stroke="#000" fill="none"/><path d="M3,11 V16 M1,14 L3,16 L5,14" stroke="#000" fill="none"/></svg>
<svg class="a" style="left:14px;top:73px" width="12" height="16" shape-rendering="crispEdges"><path d="M5.5,0.5 H10.5 V9.5 H5.5 Z" fill="#fff" stroke="#000"/><path d="M3.5,3.5 H8.5 V12.5 H3.5 Z" fill="#fff" stroke="#000"/><path d="M0.5,6.5 H6.5 V14.5 H0.5 Z" fill="#fff" stroke="#000"/></svg>
<svg class="a" style="left:36px;top:73px" width="15" height="16" shape-rendering="crispEdges"><rect x="4.5" y="0.5" width="9" height="9" fill="#f0f0f0" stroke="#222"/><rect x="5" y="1" width="8" height="2" fill="#c01010"/><rect x="2.5" y="3.5" width="9" height="9" fill="#f0f0f0" stroke="#222"/><rect x="3" y="4" width="8" height="2" fill="#c01010"/><rect x="0.5" y="6.5" width="9" height="9" fill="#d0d0d8" stroke="#222"/><rect x="1" y="7" width="8" height="2" fill="#c01010"/></svg>
<svg class="a" style="left:74px;top:74px" width="10" height="15" shape-rendering="crispEdges"><path d="M1,0.5 L9,7 L1,13.5 Z" fill="#18a018" stroke="#0a500a" shape-rendering="auto"/></svg>
<svg class="a" style="left:97px;top:74px" width="11" height="15" shape-rendering="crispEdges"><rect x="0.5" y="0.5" width="3" height="13" fill="#c8c8c8" stroke="#8a8a8a"/><rect x="6.5" y="0.5" width="3" height="13" fill="#c8c8c8" stroke="#8a8a8a"/></svg>
<svg class="a" style="left:117px;top:72px" width="15" height="18" shape-rendering="crispEdges"><path d="M1,1 Q7,0 9,5" fill="none" stroke="#000" stroke-dasharray="1,2" shape-rendering="auto"/><path d="M5.5,6 H12.5 L9,9 Z" fill="#000" shape-rendering="auto"/><rect x="6.5" y="9.5" width="7" height="7" fill="#fff" stroke="#000090" stroke-width="1.5"/></svg>
<svg class="a" style="left:139px;top:72px" width="18" height="18" shape-rendering="crispEdges"><path d="M1,6 Q8,-3 14,5" fill="none" stroke="#000" stroke-dasharray="1,2" shape-rendering="auto"/><path d="M11,5 H17 L14,8.5 Z" fill="#000" shape-rendering="auto"/><rect x="5.5" y="9.5" width="7" height="7" fill="#fff" stroke="#000090" stroke-width="1.5"/></svg>
<div class="a" style="left:164px;top:74px;width:26px;height:25px;border:1px solid #6a6a6a;background:#c0c0c0"></div>
<div class="a" style="left:165px;top:75px;width:24px;height:23px;border:1px solid #f4f4f4;border-right:none;border-bottom:none"></div>
<svg class="a" style="left:172px;top:80px" width="11" height="15" shape-rendering="crispEdges"><path d="M0.5,0.5 V11.5 L3,9 L5.5,13.5 L8,12.5 L6,8 H9.5 Z" fill="#fff" stroke="#000" shape-rendering="auto"/></svg>
<svg class="a" style="left:205px;top:76px" width="23" height="22" shape-rendering="crispEdges"><rect x="0.5" y="1.5" width="14" height="10" fill="#fff" stroke="#8a8a8a"/><rect x="1" y="2" width="13" height="2" fill="#b0b0b0"/><line x1="5.5" y1="4" x2="5.5" y2="11" stroke="#b0b0b0"/><line x1="7" y1="6.5" x2="13" y2="6.5" stroke="#b0b0b0"/><line x1="7" y1="8.5" x2="13" y2="8.5" stroke="#b0b0b0"/><path d="M16,5.5 H20" stroke="#e01010" stroke-width="1.5"/><path d="M19,3 L22,5.5 L19,8 Z" fill="#e01010"/><path d="M8.5,13 V19" stroke="#e01010" stroke-width="1.5"/><path d="M6,18 L8.5,21 L11,18 Z" fill="#e01010"/><path d="M15,13 L20,18" stroke="#e01010" stroke-width="1.5" shape-rendering="auto"/><path d="M21,15 V20 H16 Z" fill="#e01010"/></svg>
<svg class="a" style="left:232px;top:75px" width="22" height="23" shape-rendering="crispEdges"><rect x="0" y="0" width="22" height="23" fill="#fff"/><rect x="1.5" y="1.5" width="19" height="14" fill="#fff" stroke="#000"/><rect x="1" y="1" width="20" height="2" fill="#000"/><line x1="3.5" y1="3" x2="3.5" y2="15" stroke="#000"/><line x1="10.5" y1="4" x2="10.5" y2="15" stroke="#c0c0c0"/><line x1="5" y1="5.5" x2="9" y2="5.5" stroke="#208020"/><line x1="5" y1="8.5" x2="9" y2="8.5" stroke="#208020"/><line x1="5" y1="11.5" x2="9" y2="11.5" stroke="#208020"/><text x="15.5" y="14" font-family="Liberation Sans" font-weight="bold" font-size="14" text-anchor="middle" fill="#e01010">?</text><text x="1.5" y="22.5" font-family="Liberation Sans" font-size="9" fill="#e01010" textLength="14" lengthAdjust="spacingAndGlyphs">SDF</text></svg>
<svg class="a" style="left:259px;top:75px" width="22" height="23" shape-rendering="crispEdges"><rect x="0" y="0" width="22" height="23" fill="#fff"/><rect x="1.5" y="1.5" width="19" height="14" fill="#fff" stroke="#000"/><rect x="1" y="1" width="20" height="2" fill="#000"/><line x1="3.5" y1="3" x2="3.5" y2="15" stroke="#000"/><line x1="10.5" y1="4" x2="10.5" y2="15" stroke="#c0c0c0"/><line x1="5" y1="5.5" x2="9" y2="5.5" stroke="#208020"/><line x1="5" y1="8.5" x2="9" y2="8.5" stroke="#208020"/><line x1="5" y1="11.5" x2="9" y2="11.5" stroke="#208020"/><text x="15.5" y="14" font-family="Liberation Sans" font-weight="bold" font-size="14" text-anchor="middle" fill="#2050f0">?</text><text x="0.5" y="22.5" font-family="Liberation Sans" font-size="9" fill="#2050f0" textLength="21" lengthAdjust="spacingAndGlyphs">FIXED</text></svg>
<svg class="a" style="left:286px;top:75px" width="22" height="23" shape-rendering="crispEdges"><rect x="0" y="0" width="22" height="23" fill="#fff"/><rect x="1.5" y="1.5" width="19" height="14" fill="#fff" stroke="#000"/><rect x="1" y="1" width="20" height="2" fill="#000"/><line x1="3.5" y1="3" x2="3.5" y2="15" stroke="#000"/><line x1="10.5" y1="4" x2="10.5" y2="15" stroke="#c0c0c0"/><line x1="5" y1="5.5" x2="9" y2="5.5" stroke="#1060b0"/><line x1="5" y1="8.5" x2="9" y2="8.5" stroke="#1060b0"/><line x1="5" y1="11.5" x2="9" y2="11.5" stroke="#1060b0"/><text x="15.5" y="14" font-family="Liberation Sans" font-weight="bold" font-size="14" text-anchor="middle" fill="#1060b0">?</text><text x="1.5" y="22.5" font-family="Liberation Sans" font-size="9" fill="#1060b0" textLength="19.5" lengthAdjust="spacingAndGlyphs">TDBF</text></svg>
<svg class="a" style="left:357px;top:150px" width="7" height="5"><path d="M0,4 L3.5,0 L7,4 Z" fill="#1a1a1a"/><rect x="1" y="4" width="1" height="1" fill="#1a1a1a"/><rect x="5" y="4" width="1" height="1" fill="#1a1a1a"/></svg>
<svg class="a" style="left:357px;top:216px" width="7" height="5"><path d="M0,1 L3.5,5 L7,1 Z" fill="#1a1a1a"/><rect x="1" y="0" width="1" height="1" fill="#1a1a1a"/><rect x="5" y="0" width="1" height="1" fill="#1a1a1a"/></svg>
<svg class="a" style="left:357px;top:181px" width="8" height="17"><line x1="0.5" y1="6" x2="6.5" y2="0" stroke="#8a8a8a" stroke-width="0.9"/><line x1="0.5" y1="11" x2="6.5" y2="5" stroke="#8a8a8a" stroke-width="0.9"/><line x1="0.5" y1="16" x2="6.5" y2="10" stroke="#8a8a8a" stroke-width="0.9"/></svg>
<svg class="a" style="left:11px;top:234px" width="5" height="7"><path d="M4,0 L0,3.5 L4,7 Z" fill="#1a1a1a"/><rect x="4" y="1" width="1" height="1" fill="#1a1a1a"/><rect x="4" y="5" width="1" height="1" fill="#1a1a1a"/></svg>
<svg class="a" style="left:340px;top:234px" width="5" height="7"><path d="M1,0 L5,3.5 L1,7 Z" fill="#1a1a1a"/><rect x="0" y="1" width="1" height="1" fill="#1a1a1a"/><rect x="0" y="5" width="1" height="1" fill="#1a1a1a"/></svg>
<svg class="a" style="left:170px;top:234px" width="17" height="7"><line x1="0" y1="6" x2="6" y2="0" stroke="#8a8a8a" stroke-width="0.9"/><line x1="5" y1="6" x2="11" y2="0" stroke="#8a8a8a" stroke-width="0.9"/><line x1="10" y1="6" x2="16" y2="0" stroke="#8a8a8a" stroke-width="0.9"/></svg>
<svg class="a" style="left:177px;top:245px" width="30" height="6"><line x1="0" y1="5" x2="5" y2="0" stroke="#8a8a8a" stroke-width="0.9"/><line x1="6" y1="5" x2="11" y2="0" stroke="#8a8a8a" stroke-width="0.9"/><line x1="12" y1="5" x2="17" y2="0" stroke="#8a8a8a" stroke-width="0.9"/><line x1="18" y1="5" x2="23" y2="0" stroke="#8a8a8a" stroke-width="0.9"/><line x1="24" y1="5" x2="29" y2="0" stroke="#8a8a8a" stroke-width="0.9"/></svg>
<svg class="a" style="left:355px;top:284px" width="7" height="5"><path d="M0,4 L3.5,0 L7,4 Z" fill="#1a1a1a"/><rect x="1" y="4" width="1" height="1" fill="#1a1a1a"/><rect x="5" y="4" width="1" height="1" fill="#1a1a1a"/></svg>
<svg class="a" style="left:355px;top:666px" width="7" height="5"><path d="M0,1 L3.5,5 L7,1 Z" fill="#1a1a1a"/><rect x="1" y="0" width="1" height="1" fill="#1a1a1a"/><rect x="5" y="0" width="1" height="1" fill="#1a1a1a"/></svg>
<svg class="a" style="left:355px;top:470px" width="8" height="17"><line x1="0.5" y1="6" x2="6.5" y2="0" stroke="#8a8a8a" stroke-width="0.9"/><line x1="0.5" y1="11" x2="6.5" y2="5" stroke="#8a8a8a" stroke-width="0.9"/><line x1="0.5" y1="16" x2="6.5" y2="10" stroke="#8a8a8a" stroke-width="0.9"/></svg>
<svg class="a" style="left:973px;top:227px" width="7" height="5"><path d="M0,4 L3.5,0 L7,4 Z" fill="#1a1a1a"/><rect x="1" y="4" width="1" height="1" fill="#1a1a1a"/><rect x="5" y="4" width="1" height="1" fill="#1a1a1a"/></svg>
<svg class="a" style="left:973px;top:617px" width="7" height="5"><path d="M0,1 L3.5,5 L7,1 Z" fill="#1a1a1a"/><rect x="1" y="0" width="1" height="1" fill="#1a1a1a"/><rect x="5" y="0" width="1" height="1" fill="#1a1a1a"/></svg>
<svg class="a" style="left:403px;top:634px" width="5" height="7"><path d="M4,0 L0,3.5 L4,7 Z" fill="#1a1a1a"/><rect x="4" y="1" width="1" height="1" fill="#1a1a1a"/><rect x="4" y="5" width="1" height="1" fill="#1a1a1a"/></svg>
<svg class="a" style="left:957px;top:634px" width="5" height="7"><path d="M1,0 L5,3.5 L1,7 Z" fill="#1a1a1a"/><rect x="0" y="1" width="1" height="1" fill="#1a1a1a"/><rect x="0" y="5" width="1" height="1" fill="#1a1a1a"/></svg>
<svg class="a" style="left:425px;top:634px" width="17" height="7"><line x1="0" y1="6" x2="6" y2="0" stroke="#8a8a8a" stroke-width="0.9"/><line x1="5" y1="6" x2="11" y2="0" stroke="#8a8a8a" stroke-width="0.9"/><line x1="10" y1="6" x2="16" y2="0" stroke="#8a8a8a" stroke-width="0.9"/></svg>
<svg class="a" style="left:949px;top:272px" width="7" height="5"><path d="M0,4 L3.5,0 L7,4 Z" fill="#1a1a1a"/><rect x="1" y="4" width="1" height="1" fill="#1a1a1a"/><rect x="5" y="4" width="1" height="1" fill="#1a1a1a"/></svg>
<svg class="a" style="left:949px;top:431px" width="7" height="5"><path d="M0,1 L3.5,5 L7,1 Z" fill="#1a1a1a"/><rect x="1" y="0" width="1" height="1" fill="#1a1a1a"/><rect x="5" y="0" width="1" height="1" fill="#1a1a1a"/></svg>
<svg class="a" style="left:405px;top:448px" width="5" height="7"><path d="M4,0 L0,3.5 L4,7 Z" fill="#1a1a1a"/><rect x="4" y="1" width="1" height="1" fill="#1a1a1a"/><rect x="4" y="5" width="1" height="1" fill="#1a1a1a"/></svg>
<svg class="a" style="left:932px;top:448px" width="5" height="7"><path d="M1,0 L5,3.5 L1,7 Z" fill="#1a1a1a"/><rect x="0" y="1" width="1" height="1" fill="#1a1a1a"/><rect x="0" y="5" width="1" height="1" fill="#1a1a1a"/></svg>
<svg class="a" style="left:949px;top:347px" width="8" height="17"><line x1="0.5" y1="6" x2="6.5" y2="0" stroke="#8a8a8a" stroke-width="0.9"/><line x1="0.5" y1="11" x2="6.5" y2="5" stroke="#8a8a8a" stroke-width="0.9"/><line x1="0.5" y1="16" x2="6.5" y2="10" stroke="#8a8a8a" stroke-width="0.9"/></svg>
<svg class="a" style="left:973px;top:389px" width="8" height="17"><line x1="0.5" y1="6" x2="6.5" y2="0" stroke="#8a8a8a" stroke-width="0.9"/><line x1="0.5" y1="11" x2="6.5" y2="5" stroke="#8a8a8a" stroke-width="0.9"/><line x1="0.5" y1="16" x2="6.5" y2="10" stroke="#8a8a8a" stroke-width="0.9"/></svg>
<div class="a" style="left:681px;top:171px;width:27px;height:28px;background:#fff;border-left:2px solid #000;border-right:2px solid #000"></div>
<svg class="a" style="left:683px;top:173px" width="22" height="23" shape-rendering="crispEdges"><rect x="0" y="0" width="22" height="23" fill="#fff"/><rect x="1.5" y="1.5" width="19" height="14" fill="#fff" stroke="#000"/><rect x="1" y="1" width="20" height="2" fill="#000"/><line x1="3.5" y1="3" x2="3.5" y2="15" stroke="#000"/><line x1="10.5" y1="4" x2="10.5" y2="15" stroke="#c0c0c0"/><line x1="5" y1="5.5" x2="9" y2="5.5" stroke="#208020"/><line x1="5" y1="8.5" x2="9" y2="8.5" stroke="#208020"/><line x1="5" y1="11.5" x2="9" y2="11.5" stroke="#208020"/><text x="15.5" y="14" font-family="Liberation Sans" font-weight="bold" font-size="14" text-anchor="middle" fill="#e01010">?</text><text x="1.5" y="22.5" font-family="Liberation Sans" font-size="9" fill="#e01010" textLength="14" lengthAdjust="spacingAndGlyphs">SDF</text></svg>
<div class="a" style="left:720px;top:172px;width:28px;height:26px;border:2px solid #000;background:#e6e6e6"></div>
<svg class="a" style="left:723px;top:175px" width="23" height="22" shape-rendering="crispEdges"><rect x="0.5" y="1.5" width="14" height="10" fill="#fff" stroke="#8a8a8a"/><rect x="1" y="2" width="13" height="2" fill="#b0b0b0"/><line x1="5.5" y1="4" x2="5.5" y2="11" stroke="#b0b0b0"/><line x1="7" y1="6.5" x2="13" y2="6.5" stroke="#b0b0b0"/><line x1="7" y1="8.5" x2="13" y2="8.5" stroke="#b0b0b0"/><path d="M16,5.5 H20" stroke="#e01010" stroke-width="1.5"/><path d="M19,3 L22,5.5 L19,8 Z" fill="#e01010"/><path d="M8.5,13 V19" stroke="#e01010" stroke-width="1.5"/><path d="M6,18 L8.5,21 L11,18 Z" fill="#e01010"/><path d="M15,13 L20,18" stroke="#e01010" stroke-width="1.5" shape-rendering="auto"/><path d="M21,15 V20 H16 Z" fill="#e01010"/></svg>
<div class="a" style="left:681px;top:171px;width:67px;height:1px;background:#0000f0"></div>
<div class="a" style="left:681px;top:198px;width:67px;height:1px;background:#008000"></div>
<div class="a" style="left:678px;top:169px;width:5px;height:5px;background:#000"></div>
<div class="a" style="left:691px;top:169px;width:5px;height:5px;background:#000"></div>
<div class="a" style="left:704px;top:169px;width:5px;height:5px;background:#000"></div>
<div class="a" style="left:678px;top:182px;width:5px;height:5px;background:#000"></div>
<div class="a" style="left:704px;top:182px;width:5px;height:5px;background:#000"></div>
<div class="a" style="left:678px;top:195px;width:5px;height:5px;background:#000"></div>
<div class="a" style="left:691px;top:195px;width:5px;height:5px;background:#000"></div>
<div class="a" style="left:704px;top:195px;width:5px;height:5px;background:#000"></div>
<svg class="a" style="left:419px;top:471px" width="18" height="19" shape-rendering="crispEdges"><defs><linearGradient id="gg" x1="0" y1="0" x2="1" y2="0"><stop offset="0" stop-color="#e8e8e8"/><stop offset="1" stop-color="#707070"/></linearGradient></defs><rect x="0.5" y="2.5" width="5" height="13" fill="url(#gg)" stroke="#111"/><path d="M15.5,0.5 V17.5 L6.5,9 Z" fill="url(#gg)" stroke="#111" shape-rendering="auto"/></svg>
<svg class="a" style="left:477px;top:471px" width="11" height="19" shape-rendering="crispEdges"><defs><linearGradient id="gg" x1="0" y1="0" x2="1" y2="0"><stop offset="0" stop-color="#e8e8e8"/><stop offset="1" stop-color="#707070"/></linearGradient></defs><path d="M10.5,0.5 V17.5 L1,9 Z" fill="url(#gg)" stroke="#111" shape-rendering="auto"/></svg>
<svg class="a" style="left:865px;top:470px" width="20" height="20" shape-rendering="crispEdges"><defs><radialGradient id="rg" cx="0.4" cy="0.3" r="0.7"><stop offset="0" stop-color="#909090"/><stop offset="1" stop-color="#101010"/></radialGradient></defs><circle cx="10" cy="10" r="9" fill="url(#rg)" shape-rendering="auto"/><path d="M6.5,6.5 L13.5,13.5 M13.5,6.5 L6.5,13.5" stroke="#fff" stroke-width="2.6" stroke-linecap="round" shape-rendering="auto"/></svg>
<svg class="a" style="left:921px;top:470px" width="22" height="20" shape-rendering="crispEdges"><defs><linearGradient id="rf" x1="0" y1="0" x2="0" y2="1"><stop offset="0" stop-color="#bbb"/><stop offset="1" stop-color="#444"/></linearGradient></defs><path d="M6.5,8 A7,7 0 1,1 11.5,17.5" fill="none" stroke="#111" stroke-width="3.6" shape-rendering="auto"/><path d="M6.5,8 A7,7 0 1,1 11.5,17.5" fill="none" stroke="url(#rf)" stroke-width="1.8" shape-rendering="auto"/><path d="M1.2,3.8 L1.2,12.6 L10,12.6 Z" fill="url(#rf)" stroke="#111" stroke-width="1" shape-rendering="auto"/></svg>
<svg class="a" style="left:813px;top:469px" width="18" height="22" shape-rendering="crispEdges"><path d="M1,1 L13,6 L12.5,13 L1,11.5 Z" fill="#fff" stroke="#333" stroke-width="1.1" shape-rendering="auto"/><polygon points="15.10,15.70 13.20,17.23 13.46,19.66 11.03,19.40 9.50,21.30 7.97,19.40 5.54,19.66 5.80,17.23 3.90,15.70 5.80,14.17 5.54,11.74 7.97,12.00 9.50,10.10 11.03,12.00 13.46,11.74 13.20,14.17" fill="#888" stroke="#111" stroke-width="1" shape-rendering="auto"/><circle cx="9.5" cy="15.7" r="1.6" fill="#333" shape-rendering="auto"/></svg>
<div class="a" style="left:524px;top:343px;width:291px;height:192px;background:#e6e6e6;border:1px solid #000;border-radius:5px 5px 5px 5px"></div>
<div class="a" style="left:525px;top:344px;width:289px;height:190px;border-top:1px solid #fff;border-left:1px solid #fff;border-radius:4px 4px 4px 4px"></div>
<div class="a" style="left:525px;top:344px;width:288px;height:18px;border-radius:4px 4px 0 0;overflow:hidden;background:linear-gradient(#7785d4,#4c5cae);border-bottom:1px solid #3a4078"></div>
<div class="a" style="left:679px;top:345px;width:97px;height:16px;background:repeating-linear-gradient(135deg,rgba(255,255,255,0) 0px,rgba(255,255,255,0) 2.2px,rgba(220,228,255,0.32) 2.2px,rgba(220,228,255,0.32) 3.3px)"></div>
<div class="a" style="left:525px;top:344px;width:18px;height:18px;background:linear-gradient(#f2f2f6,#e0e0e8);border-radius:4px 0 0 0"></div>
<div class="a" style="left:776px;top:344px;width:19px;height:18px;background:linear-gradient(#f4f4f8,#e4e4ea);border-left:1px solid #3a4078"></div>
<div class="a" style="left:795px;top:344px;width:18px;height:18px;background:linear-gradient(#f4f4f8,#e4e4ea);border-left:1px solid #c8c8c8;border-radius:0 4px 0 0"></div>
<div class="t" style="left:546px;top:347.00px;font-size:13px;font-weight:bold;font-family:'Liberation Sans';color:#fff;text-shadow:1px 1px 0 #303870">Strings Editor Dialog</div>
<svg class="a" style="left:528px;top:348px" width="13" height="10"><polyline points="1.5,2 6.5,7 11.5,2" fill="none" stroke="#283070" stroke-width="3.2"/></svg>
<svg class="a" style="left:780px;top:348px" width="10" height="10"><rect x="0.6" y="0.6" width="8.8" height="8.8" rx="1.6" fill="none" stroke="#283070" stroke-width="1.2"/><path d="M0,3 V2 Q0,0 2,0 H8 Q10,0 10,2 V3 Z" fill="#283070"/></svg>
<svg class="a" style="left:799px;top:348px" width="10" height="10"><path d="M1.6,1.6 L8.4,8.4 M8.4,1.6 L1.6,8.4" stroke="#283070" stroke-width="3.1" stroke-linecap="round"/></svg>
<div class="a" style="left:529px;top:362px;width:1px;height:168px;background:#7a7a7a"></div>
<div class="a" style="left:809px;top:362px;width:1px;height:168px;background:#7a7a7a"></div>
<div class="a" style="left:534px;top:367px;width:270px;height:127px;border:1px solid #7a7a7a;border-right-color:#fff;border-bottom-color:#fff"></div>
<div class="a" style="left:535px;top:368px;width:268px;height:125px;border:1px solid #fff;border-right-color:#7a7a7a;border-bottom-color:#7a7a7a"></div>
<div class="t" style="left:538px;top:372.00px;font-size:13px;font-family:'Liberation Sans';">0 lines, 0 chars</div>
<div class="a" style="left:538px;top:388px;width:263px;height:103px;background:#fff;border:2px solid #a8a8a8"></div>
<div class="a" style="left:538px;top:388px;width:263px;height:103px;border-top:1px dotted #505050;border-left:1px dotted #505050"></div>
<div class="t" style="left:541px;top:391.84px;font-size:12px;font-family:'Liberation Sans';">1</div>
<div class="t" style="left:541px;top:405.84px;font-size:12px;font-family:'Liberation Sans';">2</div>
<div class="t" style="left:541px;top:419.84px;font-size:12px;font-family:'Liberation Sans';">3</div>
<div class="a" style="left:548px;top:420px;width:1px;height:11px;background:#000"></div>
<div class="a" style="left:545px;top:499px;width:80px;height:25px;border-top:1px solid #fff;border-left:1px solid #fff;border-bottom:1px solid #5e5e5e;border-right:1px solid #5e5e5e;background:#e6e6e6;"></div>
<div class="a" style="left:544px;top:498px;width:82px;height:27px;border:1px solid #c0c0c0;border-radius:1px"></div>
<div class="a" style="left:633px;top:499px;width:80px;height:25px;border-top:1px solid #fff;border-left:1px solid #fff;border-bottom:1px solid #5e5e5e;border-right:1px solid #5e5e5e;background:#e6e6e6;"></div>
<div class="a" style="left:632px;top:498px;width:82px;height:27px;border:1px solid #c0c0c0;border-radius:1px"></div>
<div class="a" style="left:721px;top:499px;width:80px;height:25px;border-top:1px solid #fff;border-left:1px solid #fff;border-bottom:1px solid #5e5e5e;border-right:1px solid #5e5e5e;background:#e6e6e6;"></div>
<div class="a" style="left:720px;top:498px;width:82px;height:27px;border:1px solid #c0c0c0;border-radius:1px"></div>
<div class="t" style="left:574px;top:505.84px;font-size:12px;font-family:'Liberation Sans';">Sort</div>
<div class="t" style="left:663px;top:505.84px;font-size:12px;font-family:'Liberation Sans';">Отмена</div>
<div class="t" style="left:764px;top:503.84px;font-size:12px;font-family:'Liberation Sans';"><u>O</u>K</div>
<svg class="a" style="left:642px;top:504px" width="16" height="16"><path d="M2.5,2.5 L12.5,13 M12.5,2 L2.5,13" stroke="#a01010" stroke-width="3.2" stroke-linecap="round"/></svg>
<svg class="a" style="left:742px;top:504px" width="19" height="16"><path d="M2,9 L6.5,13.5 L16.5,2" fill="none" stroke="#18a018" stroke-width="3.2" stroke-linecap="round" stroke-linejoin="round"/></svg>
<div class="a" style="left:529px;top:529px;width:281px;height:1px;background:#7a7a7a"></div>
<div class="a" style="left:525px;top:513px;width:4px;height:21px;background:#5060c0"></div>
<div class="a" style="left:525px;top:530px;width:21px;height:4px;background:#5060c0"></div>
<div class="a" style="left:810px;top:513px;width:4px;height:21px;background:#5060c0"></div>
<div class="a" style="left:793px;top:530px;width:21px;height:4px;background:#5060c0"></div>
</body></html>
